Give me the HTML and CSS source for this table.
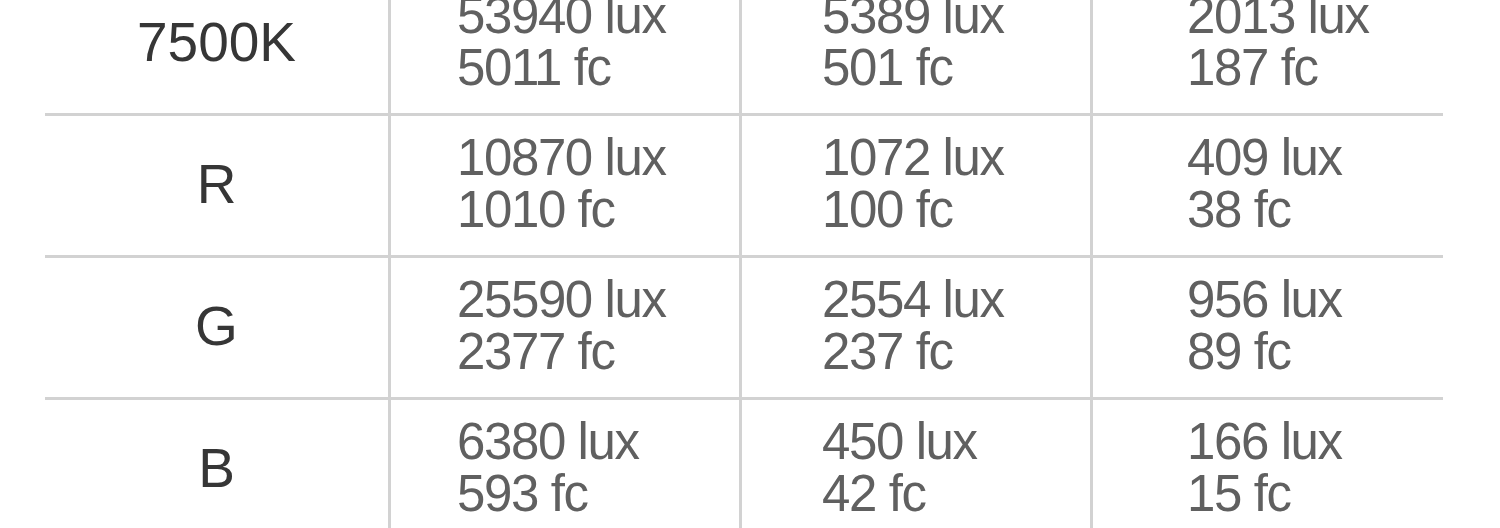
FILE: index.html
```html
<!DOCTYPE html>
<html lang="en">
<head>
<meta charset="utf-8">
<title>Illuminance table</title>
<link rel="stylesheet" href="styles.css">
</head>
<body>
<div class="page">
  <div class="table">
    <div class="cell label">7500K</div>
    <div class="cell val c2"><span>53940 lux</span><span>5011 fc</span></div>
    <div class="cell val c3"><span>5389 lux</span><span>501 fc</span></div>
    <div class="cell val c4"><span>2013 lux</span><span>187 fc</span></div>

    <div class="cell label">R</div>
    <div class="cell val c2"><span>10870 lux</span><span>1010 fc</span></div>
    <div class="cell val c3"><span>1072 lux</span><span>100 fc</span></div>
    <div class="cell val c4"><span>409 lux</span><span>38 fc</span></div>

    <div class="cell label">G</div>
    <div class="cell val c2"><span>25590 lux</span><span>2377 fc</span></div>
    <div class="cell val c3"><span>2554 lux</span><span>237 fc</span></div>
    <div class="cell val c4"><span>956 lux</span><span>89 fc</span></div>

    <div class="cell label">B</div>
    <div class="cell val c2"><span>6380 lux</span><span>593 fc</span></div>
    <div class="cell val c3"><span>450 lux</span><span>42 fc</span></div>
    <div class="cell val c4"><span>166 lux</span><span>15 fc</span></div>
  </div>
</div>
</body>
</html>
```

FILE: styles.css
```css
html, body {
  margin: 0;
  padding: 0;
  background: #ffffff;
}

body {
  width: 1500px;
  height: 528px;
  overflow: hidden;
  font-family: "Liberation Sans", Arial, sans-serif;
}

.page {
  padding-left: 45px;
}

.table {
  display: grid;
  grid-template-columns: 343px 348px 348px 350px;
  grid-auto-rows: 139px;
  gap: 3px;
  width: 1398px;
  background: #d2d2d2;
  margin-top: -26px;
}

.cell {
  background: #ffffff;
  display: flex;
  flex-direction: column;
  justify-content: center;
}

.label {
  align-items: center;
  font-size: 55px;
  color: #363636;
  padding-bottom: 3px;
}

.val {
  font-size: 51px;
  line-height: 52px;
  letter-spacing: -1.4px;
  color: #606060;
  padding-bottom: 4px;
}

.val span {
  display: block;
  white-space: nowrap;
}

.c2 { padding-left: 66px; }
.c3 { padding-left: 80px; }
.c4 { padding-left: 94px; }
```
